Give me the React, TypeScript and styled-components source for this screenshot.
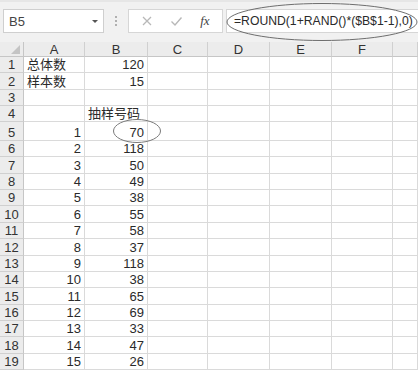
import React from 'react';
import styled, { createGlobalStyle } from 'styled-components';

const GlobalStyle = createGlobalStyle`
  body {
    margin: 0;
    background: #ffffff;
    font-family: "Liberation Sans", "Noto Sans CJK SC", sans-serif;
  }
`;

const Page = styled.div`
  position: relative;
  width: 418px;
  height: 371px;
  overflow: hidden;
  background: #ffffff;
`;

const Toolbar = styled.div`
  height: 42px;
  box-sizing: border-box;
  background: #f1f1f1;
  border-top: 2px solid #e6e6e6;
  display: flex;
  align-items: center;
  padding: 0 0 2px 3px;
`;

const NameBox = styled.div`
  width: 101px;
  height: 24px;
  box-sizing: border-box;
  background: #fff;
  border: 1px solid #cfcfcf;
  display: flex;
  align-items: center;
  justify-content: space-between;
  padding: 0 5px 0 5px;
  font-size: 13px;
  color: #444;
`;

const DropArrow = styled.span`
  width: 0;
  height: 0;
  border-left: 3px solid transparent;
  border-right: 3px solid transparent;
  border-top: 3px solid #555;
`;

const Splitter = styled.div`
  width: 24px;
  display: flex;
  flex-direction: column;
  align-items: center;
  gap: 2px;

  span {
    width: 2px;
    height: 2px;
    background: #b0b0b0;
  }
`;

const FxBox = styled.div`
  width: 95px;
  height: 24px;
  box-sizing: border-box;
  background: #fff;
  border: 1px solid #d6d6d6;
  display: flex;
  align-items: center;
  justify-content: space-around;
  padding: 0 4px;
`;

const FxLabel = styled.span`
  font-family: "Liberation Serif", serif;
  font-style: italic;
  font-size: 13px;
  color: #444;
`;

const FormulaInput = styled.div`
  flex: 1;
  height: 24px;
  margin-left: 3px;
  box-sizing: border-box;
  background: #fff;
  border: 1px solid #d6d6d6;
  border-right: none;
  display: flex;
  align-items: center;
  padding-left: 7px;
  font-size: 12.2px;
  color: #2a2a2a;
  white-space: nowrap;
`;

const Sheet = styled.div`
  display: grid;
  grid-template-columns: 24px 61px 63px 60px 62px 62px 61px 1fr;
  grid-template-rows: 15px repeat(4, 16.25px) 19px repeat(14, 16.36px);
`;

const Corner = styled.div`
  background: #ececec;
  border-right: 1px solid #c6c6c6;
  border-bottom: 1px solid #c6c6c6;
  position: relative;

  &::after {
    content: '';
    position: absolute;
    right: 3px;
    bottom: 2px;
    width: 0;
    height: 0;
    border-left: 9px solid transparent;
    border-bottom: 9px solid #c4c4c4;
  }
`;

const ColHead = styled.div`
  background: #ececec;
  border-right: 1px solid #d0d0d0;
  border-bottom: 1px solid #c6c6c6;
  display: flex;
  align-items: center;
  justify-content: center;
  font-size: 13px;
  color: #333;
`;

const RowHead = styled.div`
  background: #ececec;
  border-right: 1px solid #c6c6c6;
  border-bottom: 1px solid #d0d0d0;
  display: flex;
  align-items: flex-end;
  justify-content: center;
  font-size: 13px;
  line-height: 15px;
  color: #333;
`;

const Cell = styled.div<{ $align?: 'left' | 'right' }>`
  border-right: 1px solid #dadada;
  border-bottom: 1px solid #dadada;
  display: flex;
  align-items: flex-end;
  justify-content: ${(p) => (p.$align === 'left' ? 'flex-start' : 'flex-end')};
  padding: 0 3px;
  font-size: 13px;
  line-height: 15px;
  color: #2a2a2a;
  white-space: nowrap;
  overflow: visible;
  min-width: 0;
`;

const Marks = styled.svg`
  position: absolute;
  left: 0;
  top: 0;
  pointer-events: none;
`;

const cols = ['A', 'B', 'C', 'D', 'E', 'F', ''];

type Row = [string, string];

const rows: Row[] = [
  ['总体数', '120'],
  ['样本数', '15'],
  ['', ''],
  ['', '抽样号码'],
  ['1', '70'],
  ['2', '118'],
  ['3', '50'],
  ['4', '49'],
  ['5', '38'],
  ['6', '55'],
  ['7', '58'],
  ['8', '37'],
  ['9', '118'],
  ['10', '38'],
  ['11', '65'],
  ['12', '69'],
  ['13', '33'],
  ['14', '47'],
  ['15', '26'],
];

const isText = (s: string) => /[^\d.]/.test(s);

const App: React.FC = () => {
  return (
    <Page>
      <GlobalStyle />
      <Toolbar>
        <NameBox>
          B5
          <DropArrow />
        </NameBox>
        <Splitter>
          <span />
          <span />
          <span />
        </Splitter>
        <FxBox>
          <svg width="12" height="12" viewBox="0 0 12 12">
            <path d="M2 2 L10 10 M10 2 L2 10" stroke="#b8b8b8" strokeWidth="1.3" />
          </svg>
          <svg width="13" height="12" viewBox="0 0 13 12">
            <path d="M1.5 6.5 L5 10 L11.5 2.5" stroke="#b8b8b8" strokeWidth="1.4" fill="none" />
          </svg>
          <FxLabel>fx</FxLabel>
        </FxBox>
        <FormulaInput>=ROUND(1+RAND()*($B$1-1),0)</FormulaInput>
      </Toolbar>
      <Sheet>
        <Corner />
        {cols.map((c, i) => (
          <ColHead key={i}>{c}</ColHead>
        ))}
        {rows.map((r, i) => (
          <React.Fragment key={i}>
            <RowHead>{i + 1}</RowHead>
            <Cell $align={isText(r[0]) ? 'left' : 'right'}>{r[0]}</Cell>
            <Cell $align={isText(r[1]) ? 'left' : 'right'}>{r[1]}</Cell>
            <Cell />
            <Cell />
            <Cell />
            <Cell />
            <Cell />
          </React.Fragment>
        ))}
      </Sheet>
      <Marks width="418" height="371">
        <ellipse cx="322" cy="22" rx="95" ry="18.5" fill="none" stroke="#6e6e6e" strokeWidth="1" />
        <ellipse cx="137" cy="131" rx="23.5" ry="11.5" fill="none" stroke="#7a7a7a" strokeWidth="1" />
      </Marks>
    </Page>
  );
};

export default App;
